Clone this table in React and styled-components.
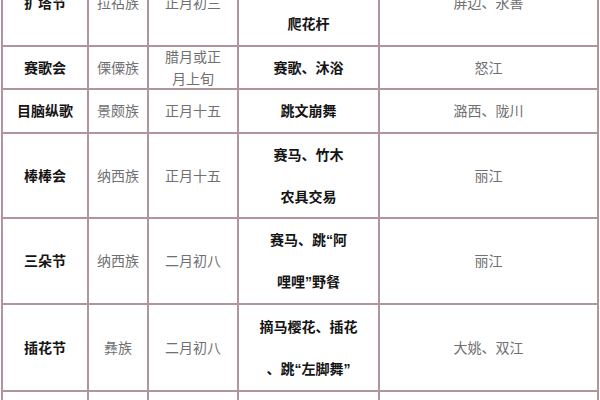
import React from "react";
import styled, { createGlobalStyle } from "styled-components";

const GlobalStyle = createGlobalStyle`
  html, body {
    margin: 0;
    padding: 0;
    background: #ffffff;
    overflow: hidden;
  }
`;

const LINE = "#b0959a";

const Page = styled.div`
  width: 600px;
  height: 400px;
  overflow: hidden;
  background: #ffffff;
`;

const Sheet = styled.div`
  margin: -42px 0 0 1px;
  width: 594px;
  display: grid;
  grid-template-columns: 84px 58px 88px 139px 217px;
  grid-template-rows: 85px 41px 42px 83px 84px 85px 42px;
  gap: 2px;
  border: 2px solid ${LINE};
  background: ${LINE};
`;

const Cell = styled.div`
  background: #ffffff;
  display: flex;
  flex-direction: column;
  align-items: center;
  justify-content: center;
  text-align: center;
  font-size: 14px;
  white-space: nowrap;
  font-family: "Liberation Sans", "Noto Sans CJK SC", sans-serif;
  font-weight: ${(p) => (p.$bold ? 700 : 400)};
  color: ${(p) => (p.$bold ? "#141414" : "#707070")};
  line-height: ${(p) => p.$lh || "20px"};
`;

const rows = [
  ["扩塔节", "拉祜族", ["正月初三"], ["跳芦笙、", "爬花杆"], "屏边、永善"],
  ["赛歌会", "傈僳族", ["腊月或正", "月上旬"], ["赛歌、沐浴"], "怒江"],
  ["目脑纵歌", "景颇族", ["正月十五"], ["跳文崩舞"], "潞西、陇川"],
  ["棒棒会", "纳西族", ["正月十五"], ["赛马、竹木", "农具交易"], "丽江"],
  ["三朵节", "纳西族", ["二月初八"], ["赛马、跳“阿", "哩哩”野餐"], "丽江"],
  ["插花节", "彝族", ["二月初八"], ["摘马樱花、插花", "、跳“左脚舞”"], "大姚、双江"],
  ["", "", [""], [""], ""],
];

function App() {
  return (
    <Page>
      <GlobalStyle />
      <Sheet>
        {rows.map(([name, people, date, events, place], i) => (
          <React.Fragment key={i}>
            <Cell $bold>{name}</Cell>
            <Cell>{people}</Cell>
            <Cell $lh="22px">
              {date.map((t, j) => (
                <span key={j}>{t}</span>
              ))}
            </Cell>
            <Cell $bold $lh={events.length > 1 ? "42px" : "20px"}>
              {events.map((t, j) => (
                <span key={j}>{t}</span>
              ))}
            </Cell>
            <Cell>{place}</Cell>
          </React.Fragment>
        ))}
      </Sheet>
    </Page>
  );
}

export default App;
